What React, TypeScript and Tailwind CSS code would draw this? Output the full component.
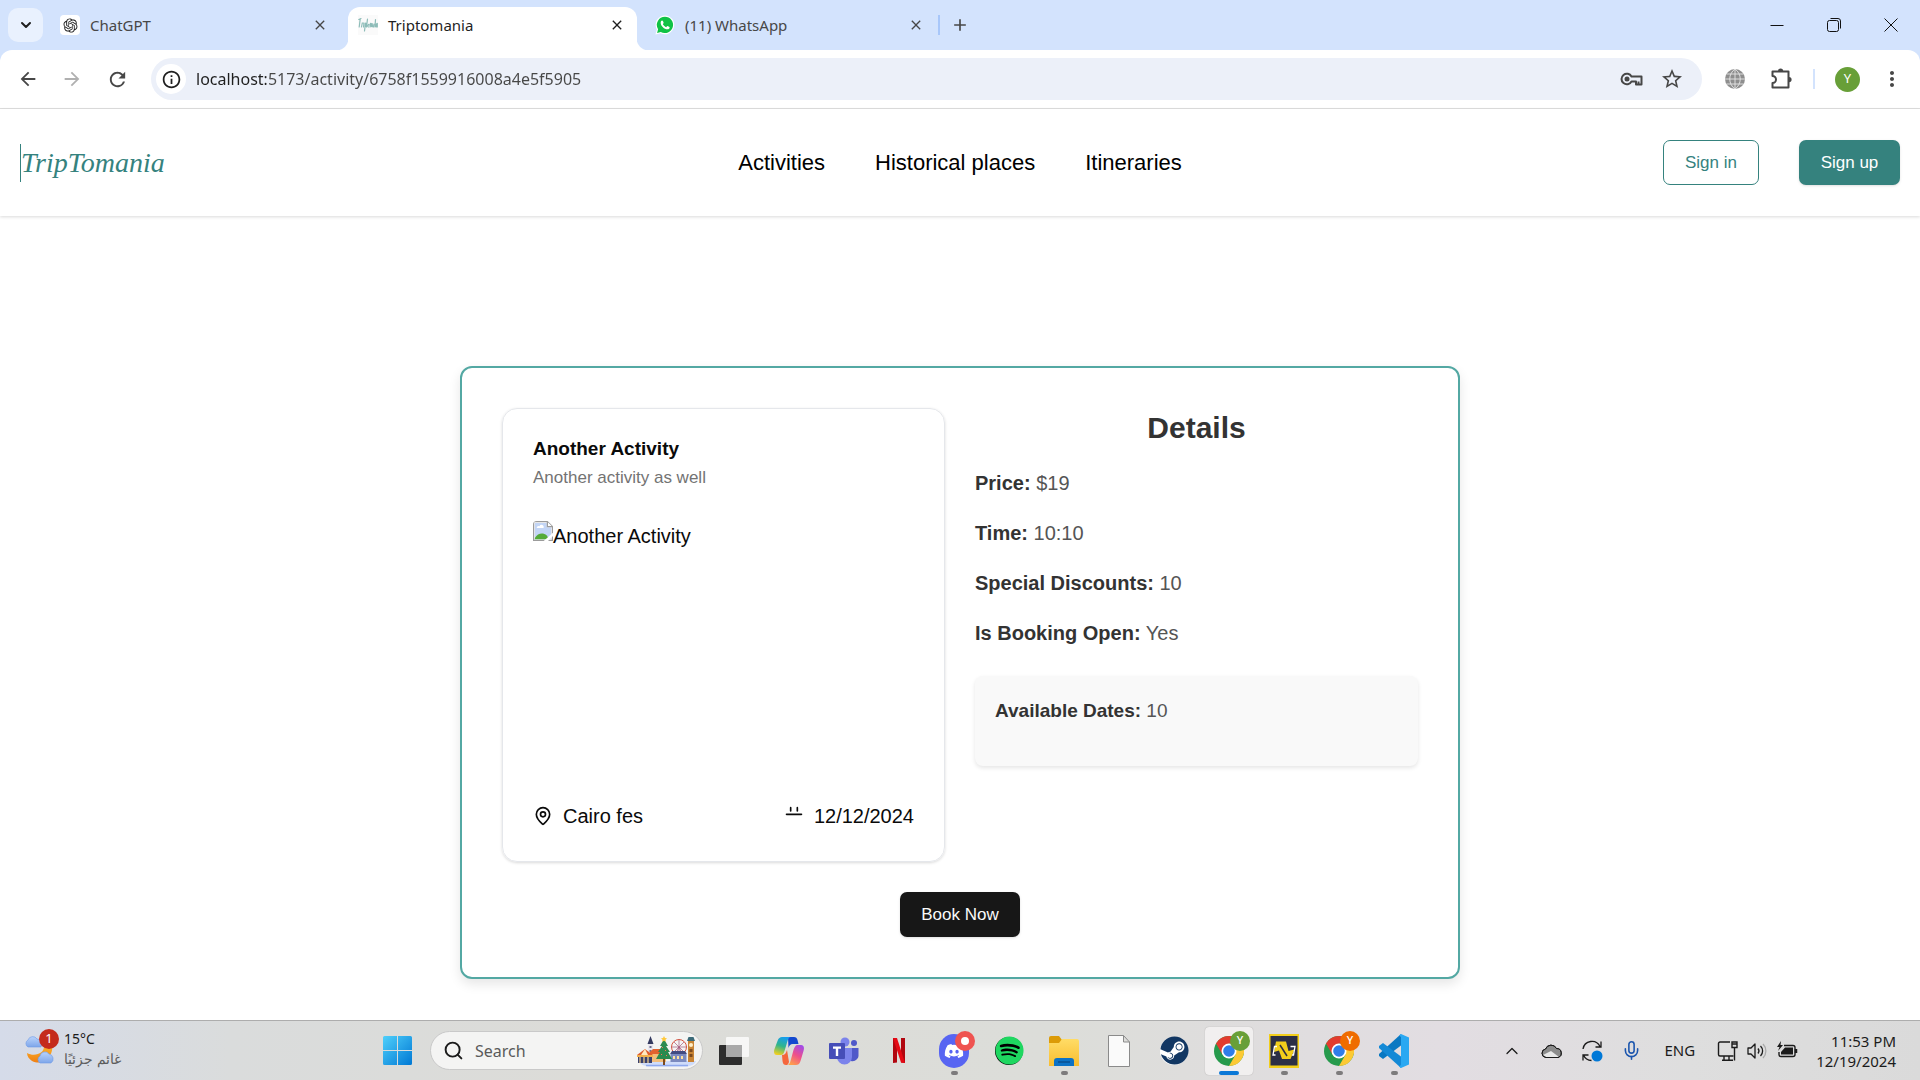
import React from "react";
import { MapPin, ChevronDown, ChevronUp, Search, Mic } from "lucide-react";
import { MdArrowBack, MdArrowForward, MdRefresh, MdStarOutline, MdMoreVert, MdClose, MdAdd, MdInfoOutline } from "react-icons/md";
import { FaDiscord, FaSpotify, FaSteam } from "react-icons/fa";
import { RiOpenaiFill } from "react-icons/ri";

const SYSTEM = "font-['Noto_Sans',sans-serif]";

/* ---------- Browser chrome ---------- */

function WhatsAppIcon() {
  return (
    <svg viewBox="0 0 24 24" className="size-5 shrink-0">
      <path d="M12 .5A11.3 11.3 0 0 0 2.2 17.4L.5 23.5l6.2-1.6A11.3 11.3 0 1 0 12 .5z" fill="#fff" />
      <path d="M12 2A9.8 9.8 0 0 0 3.7 17L2.5 21.5 7 20.3A9.8 9.8 0 1 0 12 2z" fill="#10c245" />
      <path d="M8.4 6.6c-.4 0-1.6.9-1.6 2.6 0 4 4.600 8 8 8 1.700 0 2.800-1.200 2.800-2.200 0-.8-2.300-1.800-2.800-1.800-.6 0-.9 1.400-1.400 1.400-1 0-4-2.700-4-3.700 0-.5 1-.8 1-1.400 0-.4-.9-2.900-2-2.900z" fill="#fff" />
    </svg>
  );
}

function TriptomaniaIcon() {
  return (
    <svg viewBox="0 0 20 20" className="size-5 shrink-0" fill="none" stroke="#8dbcb8" strokeWidth="1.200" strokeLinecap="round">
      <rect width="20" height="20" fill="#fafafa" stroke="none" />
      <path d="M.8 4.500 3 3.500M2.200 4 1.200 12M3.500 12l.8-4 1 0M6 8l-.5 4M7.500 8l-1 8M7.500 8c1.500 0 1 4-.5 3.500M9.500 4l-1 8M10.500 12c-1.500 0 0-4 .5-2M12 12l.5-4 1 4 .5-4 .8 4M16 9l-.5 3M17.500 4.500l-.5 7.500M18.500 12c-1 0 0-4 .8-3.500v3.500" />
    </svg>
  );
}

function TabStrip() {
  return (
    <div className="flex h-[50px] items-stretch bg-[#d3e3fd] text-[15px] text-[#474747]">
      <button aria-label="Search tabs" className="ml-2 mt-2 flex h-[34px] w-[35px] shrink-0 items-center justify-center rounded-[10px] bg-[#e9f1fe] text-[#1f1f1f]">
        <ChevronDown size={16} strokeWidth={3} />
      </button>
      <div className="flex w-[293px] items-center pl-[17px] pr-[6px]">
        <span className="flex size-5 shrink-0 items-center justify-center rounded bg-white text-[#222]">
          <RiOpenaiFill size={17} />
        </span>
        <span className="ml-[10px] flex-1">ChatGPT</span>
        <button aria-label="Close ChatGPT" className="flex size-5 items-center justify-center"><MdClose size={16} /></button>
      </div>
      <span className="mt-auto size-3 bg-[radial-gradient(circle_at_0_0,#d3e3fd_12px,#ffffff_13px)]" />
      <div className="mt-[7px] flex w-[289px] items-center rounded-t-xl bg-white px-[10px] pb-[7px] text-[#1f1f1f]">
        <TriptomaniaIcon />
        <span className="ml-[10px] flex-1">Triptomania</span>
        <button aria-label="Close Triptomania" className="flex size-5 items-center justify-center"><MdClose size={16} /></button>
      </div>
      <span className="mt-auto size-3 bg-[radial-gradient(circle_at_100%_0,#d3e3fd_12px,#ffffff_13px)]" />
      <div className="flex w-[289px] items-center pl-[6px] pr-3">
        <WhatsAppIcon />
        <span className="ml-[10px] flex-1">(11) WhatsApp</span>
        <button aria-label="Close WhatsApp" className="flex size-5 items-center justify-center"><MdClose size={16} /></button>
      </div>
      <span className="h-5 w-[2px] self-center bg-[#a8c7fa]" />
      <button aria-label="New tab" className="ml-2 flex size-6 items-center justify-center self-center"><MdAdd size={20} /></button>
      <div className="ml-auto flex text-[#111]">
        <button aria-label="Minimize" className="flex w-[57px] items-center justify-center">
          <svg viewBox="0 0 14 14" className="size-[14px]" stroke="currentColor"><path d="M.5 7.500h13" /></svg>
        </button>
        <button aria-label="Restore" className="flex w-[57px] items-center justify-center">
          <svg viewBox="0 0 14 14" className="size-[14px]" fill="none" stroke="currentColor"><rect x=".5" y="2.500" width="11" height="11" rx="2" /><path d="M3.500.5H11a2.500 2.500 0 0 1 2.500 2.500v7.500" /></svg>
        </button>
        <button aria-label="Close window" className="flex w-[58px] items-center justify-center">
          <svg viewBox="0 0 14 14" className="size-[14px]" stroke="currentColor"><path d="m.5.5 13 13M13.500.5l-13 13" /></svg>
        </button>
      </div>
    </div>
  );
}

function KeyIcon() {
  return (
    <svg viewBox="0 0 24 24" className="size-6" fill="none" stroke="currentColor" strokeWidth="2">
      <path d="M11.500 9.500A5.300 5.300 0 1 0 11.500 14.500H16v3h5.500v-3-5H11.500z" strokeLinejoin="round" />
      <path d="M18.500 17.500v-3" />
      <circle cx="7" cy="12" r="2.500" fill="currentColor" stroke="none" />
    </svg>
  );
}

function PuzzleIcon() {
  return (
    <svg viewBox="0 0 24 24" className="size-6" fill="none">
      <path d="M3.500 4.500h16v16h-16v-4.500a3.500 3.500 0 0 0 0-7z" stroke="currentColor" strokeWidth="2" strokeLinejoin="round" />
      <path d="M9 4a2.600 2.600 0 0 1 5.200 0zM20 10a2.600 2.600 0 0 1 0 5.200z" fill="currentColor" />
    </svg>
  );
}

function GlobeIcon() {
  return (
    <svg viewBox="0 0 24 24" className="size-6">
      <circle cx="12" cy="12" r="10" fill="#8e8e8e" />
      <path d="M12 2v20M2 12h20M3.500 7h17M3.500 17h17M12 2C5 7 5 17 12 22M12 2c7 5 7 15 0 20" fill="none" stroke="#e6e6e6" strokeWidth=".9" />
    </svg>
  );
}

function Toolbar() {
  return (
    <div className="bg-[#d3e3fd]">
      <div className="flex h-[59px] items-center rounded-t-xl border-b border-[#dfdfdf] bg-white pl-[6px] pr-4 text-[#474747]">
        <button aria-label="Back" className="flex w-11 justify-center"><MdArrowBack size={22} /></button>
        <button aria-label="Forward" className="flex w-11 justify-center text-[#b0b0b0]"><MdArrowForward size={22} /></button>
        <button aria-label="Reload" className="flex w-[46px] justify-center"><MdRefresh size={23} /></button>
        <div className="ml-[11px] flex h-[42px] flex-1 items-center rounded-full bg-[#ecf0f9] pl-[5px] pr-[18px]">
          <button aria-label="Site information" className="flex size-[30px] shrink-0 items-center justify-center rounded-full bg-white text-[#1f1f1f]">
            <MdInfoOutline size={21} />
          </button>
          <input
            aria-label="Address"
            defaultValue="localhost:5173/activity/6758f1559916008a4e5f5905"
            className="ml-[10px] min-w-0 flex-1 bg-[linear-gradient(90deg,#1f1f1f_70px,#474747_70px)] bg-clip-text text-[16px] text-transparent outline-none"
          />
          <button aria-label="Passwords"><KeyIcon /></button>
          <button aria-label="Bookmark" className="ml-4"><MdStarOutline size={24} /></button>
        </div>
        <button aria-label="Extension" className="ml-[21px]"><GlobeIcon /></button>
        <button aria-label="Extensions" className="ml-[22px]"><PuzzleIcon /></button>
        <span className="ml-5 h-5 w-[2px] bg-[#d3e3fd]" />
        <button aria-label="Profile" className="ml-5 flex size-[25px] items-center justify-center rounded-full bg-[#689f38] text-[13px] text-white">Y</button>
        <button aria-label="Menu" className="ml-5"><MdMoreVert size={24} /></button>
      </div>
    </div>
  );
}

/* ---------- Site ---------- */

function SiteHeader() {
  return (
    <header className="relative z-10 grid h-[107px] grid-cols-[1fr_auto_1fr] items-center bg-white px-5 shadow-[0_1px_3px_rgba(0,0,0,0.15)]">
      <a href="#home" className="flex h-[38px] items-center justify-self-start border-l border-[#35827e] font-['Liberation_Serif',serif] text-[28px] italic text-[#35827e]">
        TripTomania
      </a>
      <nav className="flex gap-[50px] text-[22px] text-black">
        <a href="#activities">Activities</a>
        <a href="#places">Historical places</a>
        <a href="#itineraries">Itineraries</a>
      </nav>
      <div className="flex gap-10 justify-self-end text-[17px]">
        <button className="h-[45px] w-24 rounded-[7px] border border-[#35827e] text-[#35827e]">Sign in</button>
        <button className="h-[45px] w-[101px] rounded-[7px] bg-[#35827e] text-white shadow-sm">Sign up</button>
      </div>
    </header>
  );
}

function BrokenImage() {
  return (
    <svg viewBox="0 0 16 16" className="size-5 shrink-0">
      <path d="M.5.5h11l4 4v11H.5z" fill="#fff" stroke="#9b9b9b" />
      <path d="M1.500 1.500h9.500v3.500h3.500v9.500h-13z" fill="#c3d5f5" />
      <path d="M3 5.500a1.500 1.500 0 0 1 2.200-1.400A1.800 1.800 0 0 1 8.500 5.500z" fill="#fff" />
      <path d="M1.500 14.500v-1C4 9.500 8 9 11 11.500l2 3z" fill="#55ab38" />
      <path d="M11.500.5v4h4" fill="#fff" stroke="#9b9b9b" />
      <path d="M8 16.500 16.500 9v2.500l-5 5z" fill="#fff" />
      <path d="M0 0h3a3 3 0 0 0-3 3z" fill="#fff" />
    </svg>
  );
}

function CalendarTop() {
  return (
    <svg viewBox="0 0 24 24" className="size-5" fill="none" stroke="currentColor" strokeWidth="2" strokeLinecap="round">
      <path d="M8 2v4M16 2v4M3 10h18" />
    </svg>
  );
}

const DETAILS = [
  ["Price:", "$19"],
  ["Time:", "10:10"],
  ["Special Discounts:", "10"],
  ["Is Booking Open:", "Yes"],
];

function ActivityPage() {
  return (
    <main className="flex-1 bg-white px-8 pb-10 pt-[150px]">
      <section className="mx-auto max-w-[1000px] rounded-xl border-2 border-[#53a8a3] bg-white p-10 shadow-[0_5px_12px_rgba(0,0,0,0.1)]">
        <div className="grid grid-cols-2 gap-[30px]">
          <article className="rounded-[15px] border border-[#e5e7eb] p-[30px] shadow-[0_1px_3px_rgba(0,0,0,0.15)]">
            <h3 className="text-[19px] font-bold leading-5 text-[#0a0a0a]">Another Activity</h3>
            <p className="mt-[6px] text-[17px] leading-[25px] text-[#737373]">Another activity as well</p>
            <div role="img" aria-label="Another Activity" className="mt-[31px] flex h-[280px] items-start text-[20px] leading-[30px] text-[#0a0a0a]">
              <BrokenImage />
              <span>Another Activity</span>
            </div>
            <div className="flex justify-between text-[20px] leading-[30px] text-[#0a0a0a]">
              <span className="flex items-center gap-[10px]"><MapPin size={20} />Cairo fes</span>
              <span className="flex items-center gap-[10px]"><CalendarTop />12/12/2024</span>
            </div>
          </article>
          <div>
            <h2 className="mb-5 text-center text-[30px] font-bold leading-10 text-[#333]">Details</h2>
            {DETAILS.map(([label, value]) => (
              <p key={label} className="mb-5 text-[20px] leading-[30px] text-[#555]">
                <strong className="text-[#333]">{label}</strong> {value}
              </p>
            ))}
            <div className="mt-7 rounded-lg bg-[#f9f9f9] px-5 pb-10 pt-5 shadow-[0_2px_4px_rgba(0,0,0,0.1)]">
              <p className="text-[19px] leading-[30px] text-[#555]">
                <strong className="text-[#333]">Available Dates:</strong> 10
              </p>
            </div>
          </div>
        </div>
        <button className="mx-auto mt-[30px] block h-[45px] w-[120px] rounded-[7px] bg-[#171717] text-[17px] text-[#fafafa] shadow-sm">Book Now</button>
      </section>
    </main>
  );
}

/* ---------- Taskbar ---------- */

function WeatherIcon() {
  return (
    <svg viewBox="0 0 36 36" className="size-9">
      <defs>
        <linearGradient id="cloud" x2="0" y2="1"><stop stopColor="#b9d3fb" /><stop offset="1" stopColor="#7ea6ea" /></linearGradient>
        <linearGradient id="moon" x2="0" y2="1"><stop stopColor="#fbb62c" /><stop offset="1" stopColor="#f07f13" /></linearGradient>
      </defs>
      <path d="M28 12c2 10-8 22-20 16-3-2-5-5-5-8 7 4 18 1 17-8z" fill="url(#moon)" />
      <path d="M4 14a4 4 0 0 1 0-7 5 5 0 0 1 9-1 5 5 0 0 1 4 8z" fill="url(#cloud)" stroke="#6f9be6" strokeWidth=".6" />
      <path d="M16 30a4 4 0 0 1 0-7 5 5 0 0 1 9-2 5 5 0 0 1 2 9z" fill="url(#cloud)" stroke="#6f9be6" strokeWidth=".6" />
    </svg>
  );
}

function ChristmasMarket() {
  return (
    <svg viewBox="0 0 60 32" className="h-8 w-[60px] shrink-0">
      <path d="M3 26h57c-1 4-6 5.500-12 5.500H14C8 31.500 4 29 3 26z" fill="#cfdcfa" />
      <path d="M10 30.500h42" stroke="#8fa9ee" strokeWidth="1.500" />
      <path d="M12 26V9h5v17z" fill="#e9e6ee" /><path d="M11.500 9 14.500 1l3 8z" fill="#33395f" />
      <path d="M13.500 11h2v2h-2zM13.500 15h2v2h-2z" fill="#6c6f8e" />
      <path d="M14 17l3-3h10l3 3v3H14z" fill="#e2622f" /><path d="M15 19h15v8H15z" fill="#f2bd7b" />
      <circle cx="43" cy="12" r="7.500" fill="none" stroke="#d8553f" strokeWidth="1" />
      <path d="M43 4.500v15M35.500 12h15M38 7l10 10M48 7 38 17M43 12l-5 12M43 12l5 12" stroke="#a4567a" strokeWidth=".7" />
      <path d="M34 19l2-3h13l2 3z" fill="#424b81" /><path d="M34.500 19h16v8h-16z" fill="#7b8abf" />
      <path d="M37 21h2v3h-2zM41 21h2v3h-2zM45 21h2v3h-2z" fill="#ffe3a0" />
      <path d="M52 27V6h6v21z" fill="#c98536" /><path d="M51 6l1.500-4h5L59 6z" fill="#3b6a78" />
      <circle cx="55" cy="10" r="2" fill="#fff0c9" /><path d="M53.500 14h3v3h-3zM53.500 19h3v3h-3z" fill="#7b4a1f" />
      <path d="M1 20 9 14l8 6z" fill="#df5b2b" /><path d="M5 20l4-6 3 6z" fill="#ffe8c0" />
      <path d="M1 20h16v2H1z" fill="#f4b04b" /><path d="M2 22h14v6H2z" fill="#39406d" />
      <path d="M4 22v6M8 22v6M12 22v6" stroke="#f7d28e" strokeWidth="1.200" />
      <path d="M28 4l4 7h-2l4 6h-2l4 7H20l4-7h-2l4-6h-2z" fill="#2b8a4f" /><path d="M27 24h2v6h-2z" fill="#7b4a1f" />
      <path d="m28 1 1 2 2 .3-1.500 1.400.4 2.100L28 5.800l-1.900 1 .4-2.100L25 3.300l2-.3z" fill="#ffc83a" />
      <path d="M26 12h1v1h-1zM29 15h1v1h-1zM25 19h1v1h-1zM30 20h1v1h-1z" fill="#ff7350" />
    </svg>
  );
}

function WindowsLogo() {
  return (
    <svg viewBox="0 0 29 29" className="size-[29px]">
      <defs><linearGradient id="win" x2="1" y2="1"><stop stopColor="#4fd0fb" /><stop offset="1" stopColor="#0078d4" /></linearGradient></defs>
      <path d="M1.500 0H14v14H0V1.500A1.500 1.500 0 0 1 1.500 0zM15 0h12.500A1.500 1.500 0 0 1 29 1.500V14H15zM0 15h14v14H1.500A1.500 1.500 0 0 1 0 27.500zM15 15h14v12.500a1.500 1.500 0 0 1-1.500 1.500H15z" fill="url(#win)" />
    </svg>
  );
}

function TaskView() {
  return (
    <svg viewBox="0 0 30 28" className="h-7 w-[30px]">
      <rect y="8" width="23" height="20" rx="1" fill="#2d2d2d" />
      <rect x="7" width="23" height="20" rx="1" fill="#f8f8f8" fillOpacity=".92" />
      <rect x="7" y="8" width="16" height="12" fill="#a9a9a9" />
    </svg>
  );
}

function Copilot() {
  return (
    <svg viewBox="0 0 30 28" className="h-7 w-[30px]">
      <defs>
        <linearGradient id="cpA" x1=".6" y1="0" x2=".3" y2="1"><stop stopColor="#169df0" /><stop offset=".5" stopColor="#2fb58c" /><stop offset="1" stopColor="#f0cf1f" /></linearGradient>
        <linearGradient id="cpB" x1=".8" y1="0" x2=".3" y2="1"><stop stopColor="#a14be8" /><stop offset=".5" stopColor="#ee4f8b" /><stop offset="1" stopColor="#ffa04a" /></linearGradient>
      </defs>
      <path d="M14 0h6c2 0 3 1 3.500 3l1 4h-6c-2 0-3 1-4 4z" fill="#1348cf" />
      <path d="M8 0h9c-2 0-3 2-3.500 4l-3 10c-1 3-2 4-4 4H3c-3 0-3.500-3-2.500-6L3.500 4C4.500 1 6 0 8 0z" fill="url(#cpA)" />
      <path d="M8 18c3 0 4-2 5-5l2 12c-1 3-2 3-3 3-2 0-3-1-3.500-4z" fill="#f5663c" />
      <path d="M22 28h-9c2 0 3-2 3.500-4l3-11c1-3 2-5 4-5H27c3 0 3.500 3 2.500 6l-3 10c-1 3-2.500 4-4.500 4z" fill="url(#cpB)" />
    </svg>
  );
}

function Teams() {
  return (
    <svg viewBox="0 0 30 28" className="h-7 w-[30px]">
      <circle cx="16" cy="5" r="4.500" fill="#7b83eb" /><circle cx="25" cy="6" r="3" fill="#5059c9" />
      <path d="M20 11h9.500v8a6 6 0 0 1-9.500 4z" fill="#5059c9" />
      <path d="M8 11h15v9a7.500 7.500 0 0 1-15 0z" fill="#7b83eb" />
      <rect y="6" width="16" height="16" rx="1" fill="#464eb8" />
      <path d="M4 9.500h8v2.200H9.200V19H6.800v-7.300H4z" fill="#fff" />
    </svg>
  );
}

function Netflix() {
  return (
    <svg viewBox="0 0 12 25" className="h-[25px] w-3">
      <path d="M0 0h4v24.500L0 25zM8 0h4v25l-4-.5z" fill="#b1060f" />
      <path d="M0 0h4l8 25-4-.5z" fill="#e50914" />
    </svg>
  );
}

function Chrome() {
  return (
    <svg viewBox="0 0 30 30" className="h-8 w-[30px]">
      <circle cx="15" cy="15" r="15" fill="#269a4c" />
      <path d="M15 30l6.500-11.200V7.500H28A15 15 0 0 1 15 30z" fill="#fcc934" />
      <path d="M2 7.500A15 15 0 0 1 28 7.500H15L8.500 18.800z" fill="#e33b2e" />
      <circle cx="15" cy="15" r="7.500" fill="#fff" /><circle cx="15" cy="15" r="5.800" fill="#2f7de9" />
    </svg>
  );
}

function Explorer() {
  return (
    <svg viewBox="0 0 30 30" className="size-[30px]">
      <defs><linearGradient id="fold" x2="0" y2="1"><stop stopColor="#ffdc66" /><stop offset="1" stopColor="#f9bd2f" /></linearGradient></defs>
      <path d="M0 2a2 2 0 0 1 2-2h8l3 4v6H0z" fill="#dc9b07" />
      <path d="M0 7h10l3-4h15a2 2 0 0 1 2 2v25H0z" fill="url(#fold)" />
      <path d="M5 30v-5a3 3 0 0 1 3-3h14a3 3 0 0 1 3 3v5z" fill="#0c72c6" /><path d="M9 26h12" stroke="#063f76" />
    </svg>
  );
}

function FileIcon() {
  return (
    <svg viewBox="0 0 22 32" className="h-8 w-[22px]" fill="#fafafa" stroke="#8a8a8a"><path d="M.5.500h15l6 6.500v24.500H.500zM15.500.5V7h6" /></svg>
  );
}

function BoltApp() {
  return (
    <svg viewBox="0 0 30 34" className="h-[34px] w-[30px]">
      <path d="M0 0h30v34H0z" fill="#f2ce1b" /><path d="M1.500 2h27v29.500h-27z" fill="#2c2f45" />
      <path d="M7 7.500h10l2.500 9.500 6-1.500-4 9.500H13l-3-8.500-5 1.500z" fill="#f2ce1b" />
      <path d="M11 11l7 11" stroke="#2c2f45" strokeWidth="1.500" />
      <path d="M8 12.500H5.500L4 21h2.500M21.500 12.500H26L24.500 21H23" fill="none" stroke="#fff" strokeWidth="1.300" />
    </svg>
  );
}

function VSCode() {
  return (
    <svg viewBox="0 0 30 34" className="h-[34px] w-[30px]">
      <path d="M22 0 24 10 4 25l-4-3v-2z" fill="#0a78c2" />
      <path d="M22 34 24 24 4 9l-4 3v2z" fill="#1489d6" />
      <path d="M22 0l8 3.500v27L22 34l-2-1.500 2-1.500V3l-2-1.500z" fill="#2aa8f2" />
    </svg>
  );
}

function Badge({ children, tone }: { children?: React.ReactNode; tone: string }) {
  return <span className={"absolute right-[3px] top-1 flex size-5 items-center justify-center rounded-full text-[11px] font-medium text-white " + tone}>{children}</span>;
}

const APPS: { name: string; icon: React.ReactNode; badge?: React.ReactNode; state?: "open" | "active" }[] = [
  { name: "Task view", icon: <TaskView /> },
  { name: "Copilot", icon: <Copilot /> },
  { name: "Teams", icon: <Teams /> },
  { name: "Netflix", icon: <Netflix /> },
  { name: "Discord", icon: <span className="flex h-[34px] w-[30px] items-center justify-center rounded-full bg-[#5865f2]"><FaDiscord size={20} color="#fff" /></span>, badge: <Badge tone="bg-[#ef5350]"><span className="size-2 rounded-full bg-white" /></Badge>, state: "open" },
  { name: "Spotify", icon: <span className="flex size-[28px] items-center justify-center rounded-full bg-black"><FaSpotify size={29} color="#1ed760" className="shrink-0" /></span> },
  { name: "File Explorer", icon: <Explorer />, state: "open" },
  { name: "File", icon: <FileIcon /> },
  { name: "Steam", icon: <span className="flex size-[28px] items-center justify-center rounded-full bg-white"><FaSteam size={29} color="#123763" className="shrink-0" /></span> },
  { name: "Chrome", icon: <Chrome />, badge: <Badge tone="bg-[#689f38]">Y</Badge>, state: "active" },
  { name: "Editor", icon: <BoltApp />, state: "open" },
  { name: "Chrome second profile", icon: <Chrome />, badge: <Badge tone="bg-[#ef6c00]">Y</Badge>, state: "open" },
  { name: "Visual Studio Code", icon: <VSCode />, state: "open" },
];

function Tray() {
  return (
    <div className="ml-auto flex items-center pr-6 text-[#1b1b1b]">
      <button aria-label="Show hidden icons"><ChevronUp size={20} strokeWidth={1.500} /></button>
      <svg viewBox="0 0 22 16" className="ml-[19px] h-4 w-[22px]" stroke="#1b1b1b">
        <path d="M5 14.500a4.300 4.300 0 0 1-.5-8.500 6 6 0 0 1 11-.5A4.600 4.600 0 0 1 17 14.500z" fill="#8c8c8c" />
        <path d="M2 12 10 8l8 6H5z" fill="#e8e8e8" stroke="none" /><path d="M5 14.500a4.300 4.300 0 0 1-.5-8.500 6 6 0 0 1 11-.5A4.600 4.600 0 0 1 17 14.500z" fill="none" />
      </svg>
      <svg viewBox="0 0 22 22" className="ml-[18px] size-[22px]" fill="none" stroke="#1b1b1b" strokeWidth="1.300">
        <path d="M2 9a9 9 0 0 1 17-2.500M20 1.500v5.500h-5.500M2 20.500V15h5.500M2.500 15a9 9 0 0 0 8 5.500" /><circle cx="16" cy="16" r="5.500" fill="#0078d7" stroke="none" />
      </svg>
      <Mic size={21} strokeWidth={1.800} className="ml-[18px] text-[#1c56ae]" />
      <span className="ml-[23px] text-[15px]">ENG</span>
      <svg viewBox="0 0 22 22" className="ml-[22px] size-[22px]" fill="none" stroke="currentColor" strokeWidth="1.400">
        <path d="M13 2H3a1.500 1.500 0 0 0-1.500 1.500v11A1.500 1.500 0 0 0 3 16h13.500M7 16v4M12 16v4M5 20.300h11" /><path d="M15 2h5v5.500h-5zM15 4h5M17.500 8v12.500" />
      </svg>
      <svg viewBox="0 0 22 22" className="ml-[7px] size-[22px]" fill="none" stroke="currentColor" strokeWidth="1.300" strokeLinejoin="round">
        <path d="M2 8h3l4-4v14l-4-4H2zM12 8.500a4 4 0 0 1 0 5M14.500 6a7 7 0 0 1 0 10" /><path d="M17 4a10 10 0 0 1 0 14" stroke="#aaa" />
      </svg>
      <svg viewBox="0 0 22 22" className="ml-2 size-[22px]" fill="none" stroke="currentColor" strokeWidth="1.400">
        <path d="M8 5.500h9a2 2 0 0 1 2 2v7a2 2 0 0 1-2 2H5a2 2 0 0 1-2-2V12" /><path d="M9 7.500h8v7H5V12z" fill="currentColor" stroke="none" /><path d="M20 9v4" strokeWidth="2.500" /><path d="M5 1 1 7h2.500L2 11l5-6H4.500z" fill="currentColor" stroke="none" />
      </svg>
      <div className="ml-[18px] text-right text-[15px] leading-5">
        <div>11:53 PM</div>
        <div>12/19/2024</div>
      </div>
    </div>
  );
}

function Taskbar() {
  return (
    <footer className="flex h-[60px] shrink-0 border-t border-[#adadad] bg-[linear-gradient(90deg,#d5dbe9_0%,#dadcdc_12%,#dcdcd8_30%,#dcddd9_55%,#e2dde2_75%,#dedede_88%,#dadada_100%)]">
      <button className="flex w-[373px] shrink-0 items-center pl-6 text-left">
        <span className="relative">
          <WeatherIcon />
          <span className="absolute -top-1 left-[15px] flex size-5 items-center justify-center rounded-full bg-[#c42b1c] text-[13px] text-white">1</span>
        </span>
        <span className="ml-1 pb-1 text-[14px] leading-5 text-[#1b1b1b]">
          <span className="block">15°C</span>
          <span className="block text-[#5c5c5c]" dir="rtl" lang="ar">غائم جزئيًا</span>
        </span>
      </button>
      <button aria-label="Start" className="flex w-12 items-center justify-center"><WindowsLogo /></button>
      <label className="ml-[9px] flex h-[39px] w-[273px] items-center self-center rounded-full border border-[#c9c9c9] bg-[#f4f4f3] pl-3 pr-[6px]">
        <Search size={21} strokeWidth={2.200} className="shrink-0 text-[#1b1b1b]" />
        <input aria-label="Search" placeholder="Search" className="ml-[11px] min-w-0 flex-1 text-[16px] outline-none placeholder:text-[#5a5a5a]" />
        <ChristmasMarket />
      </label>
      <div className="ml-[7px] flex items-center gap-[7px]">
        {APPS.map((app) => (
          <button
            key={app.name}
            aria-label={app.name}
            className={"relative flex h-12 w-12 items-center justify-center rounded " + (app.state === "active" ? "bg-[#f1efef] shadow-[0_0_1px_rgba(0,0,0,0.3)]" : "")}
          >
            {app.icon}
            {app.badge}
            {app.state === "open" && <span className="absolute bottom-0 h-1 w-[7px] rounded-full bg-[#7d7b7c]" />}
            {app.state === "active" && <span className="absolute bottom-0 h-1 w-5 rounded-full bg-[#0b78d7]" />}
          </button>
        ))}
      </div>
      <Tray />
    </footer>
  );
}

export default function App() {
  return (
    <div className="flex min-h-screen flex-col bg-white font-['Liberation_Sans',Arial,sans-serif]">
      <div className={SYSTEM}>
        <TabStrip />
        <Toolbar />
      </div>
      <SiteHeader />
      <ActivityPage />
      <div className={SYSTEM}>
        <Taskbar />
      </div>
    </div>
  );
}
